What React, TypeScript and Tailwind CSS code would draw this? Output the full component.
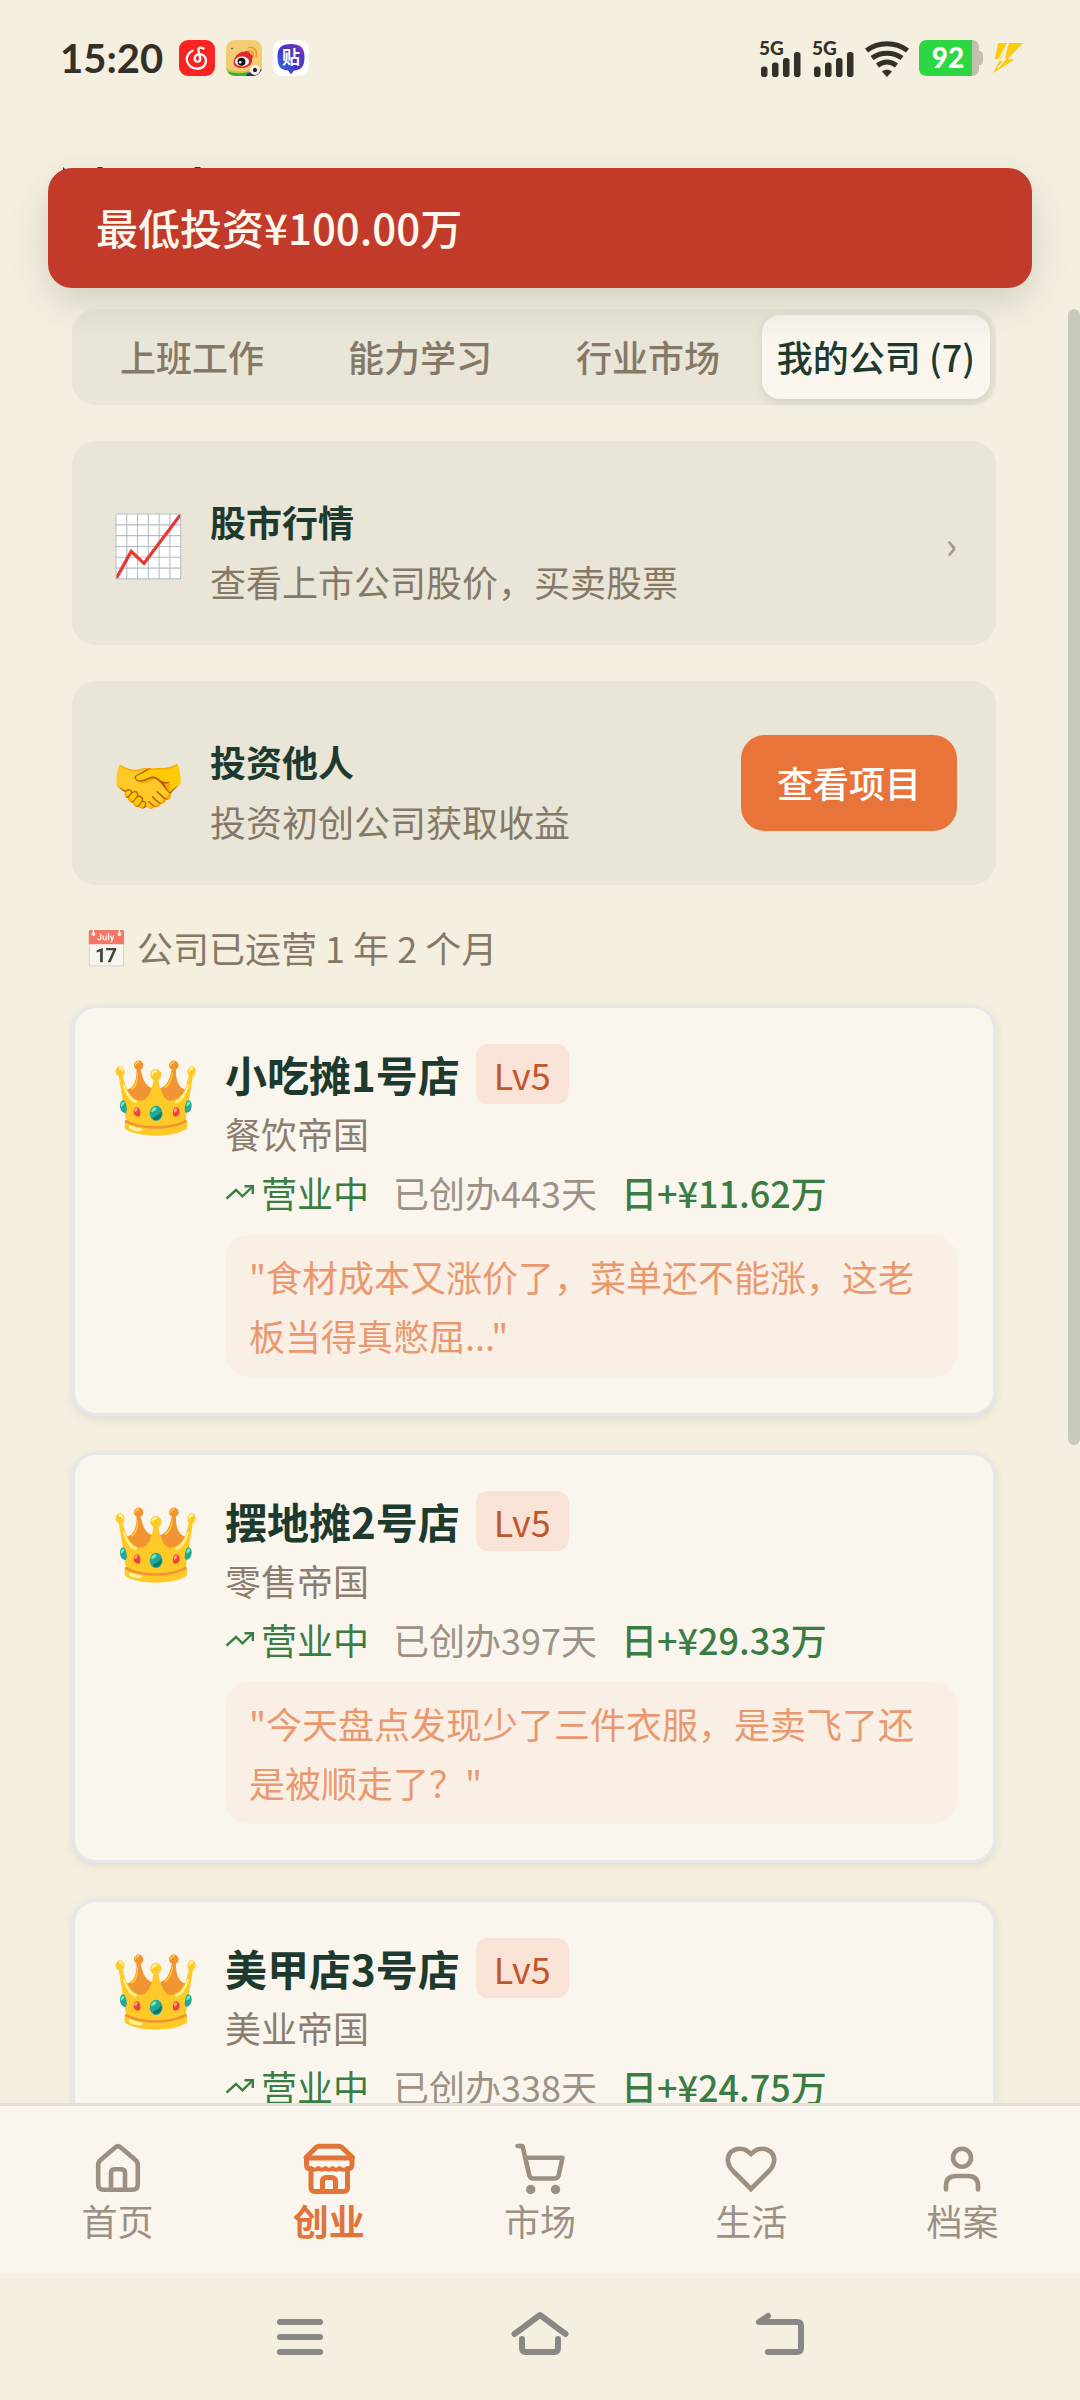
import React from 'react'

interface Company {
  id: number
  name: string
  level: number
  industry: string
  days: number
  dailyIncome: string
  quote?: string
}

const companies: Company[] = [
  {
    id: 1,
    name: '小吃摊1号店',
    level: 5,
    industry: '餐饮帝国',
    days: 443,
    dailyIncome: '11.62万',
    quote: '"食材成本又涨价了，菜单还不能涨，这老板当得真憋屈..."',
  },
  {
    id: 2,
    name: '摆地摊2号店',
    level: 5,
    industry: '零售帝国',
    days: 397,
    dailyIncome: '29.33万',
    quote: '"今天盘点发现少了三件衣服，是卖飞了还是被顺走了？"',
  },
  {
    id: 3,
    name: '美甲店3号店',
    level: 5,
    industry: '美业帝国',
    days: 338,
    dailyIncome: '24.75万',
  },
]

const tabs = ['上班工作', '能力学习', '行业市场', '我的公司 (7)']

const emojiFont = "font-['Noto_Color_Emoji','Noto_Sans_CJK_SC',sans-serif]"

const SignalIcon = () => (
  <svg viewBox="0 0 43 38" className="h-[38px] w-[43px] overflow-visible" fill="#332f29">
    <text x="0" y="16" fontSize="19" fontWeight="900" fontFamily="Lato, sans-serif">
      5G
    </text>
    <rect x="2" y="27.500" width="6.500" height="10.500" rx="2.800" />
    <rect x="13" y="23.500" width="6.500" height="14.500" rx="2.800" />
    <rect x="24" y="19" width="6.500" height="19" rx="2.800" />
    <rect x="35" y="13" width="6.500" height="25" rx="2.800" />
  </svg>
)

const WifiIcon = () => (
  <svg viewBox="0 0 44 38" className="h-[38px] w-11" fill="none" stroke="#332f29" strokeWidth="5">
    <path d="M1.500 11.500C13.500 2.500 30.500 2.500 42.500 11.500" />
    <path d="M7 19C16 12.500 28 12.500 37 19" />
    <path d="M12.500 26.500C18.500 22 25.500 22 31.500 26.500" />
    <path d="M17 32.500C20 30 24 30 27 32.500L22 38Z" fill="#332f29" stroke="none" />
  </svg>
)

const BatteryIcon = () => (
  <svg viewBox="0 0 64 36" className="h-9 w-16">
    <path d="M50 0h3c4 0 7 3 7 7v4c3 0 4 2 4 4v6c0 2-1 4-4 4v4c0 4-3 7-7 7h-3z" fill="#c3bfae" />
    <path d="M8 0h45v36H8c-5 0-8-3-8-8V8c0-5 3-8 8-8z" fill="#2bd743" />
    <text x="29" y="28" textAnchor="middle" fontSize="28" fontWeight="900" fill="#fff" fontFamily="Lato, sans-serif">
      92
    </text>
  </svg>
)

const MusicAppIcon = () => (
  <svg viewBox="0 0 36 36" className="size-9">
    <rect width="36" height="36" rx="9" fill="#fb2321" />
    <path
      d="M24.500 8.500c-3-2-5.500-.5-5 2l1.700 8c.7 3.500-5.200 4.500-5.600.5-.3-4.500 5.400-6.300 9-3.500 4.500 4 2.500 13-6.500 13.200C9 28.500 5.500 19.500 9.500 14c1.300-1.800 2.500-2.500 4-3.200"
      fill="none"
      stroke="#fff"
      strokeWidth="2.300"
      strokeLinecap="round"
    />
  </svg>
)

const WeiboAppIcon = () => (
  <svg viewBox="0 0 36 36" className="size-9">
    <defs>
      <clipPath id="weibo-clip">
        <rect width="36" height="36" rx="9" />
      </clipPath>
    </defs>
    <g clipPath="url(#weibo-clip)">
      <rect width="36" height="36" fill="#f3cc74" />
      <path d="M0 28q14 6 24 2l12 6H0z" fill="#c9c53a" />
      <path d="M0 31q12 4 22 1l6 4H0z" fill="#3cae3f" />
      <path d="M22 33l14-4v7H20z" fill="#3b2a8c" />
      <path d="M8 20c2-6 8-9 10-8 2-2 6-1 6 2 4 1 3 4 2 5 1 6-5 9-10 9S6 26 8 20z" fill="#e3262b" />
      <ellipse cx="16" cy="21.500" rx="7" ry="5" fill="#fff" />
      <circle cx="15.500" cy="21.700" r="4" fill="#111" />
      <circle cx="14.200" cy="22.300" r="1.300" fill="#fff" />
      <path d="M22 11c4-1 6 2 5 5M23 7.500c6-1 8.500 4 7 9" fill="none" stroke="#f0962b" strokeWidth="1.500" strokeLinecap="round" />
      <circle cx="6" cy="8.500" r=".8" fill="#445" />
      <circle cx="29" cy="30" r="5" fill="#f5f5f5" />
      <path d="M29 27.500l2.300 1.700-.9 2.800h-2.800l-.9-2.800zM24.500 28l1.200 1M33.500 28l-1.200 1" fill="#222" />
    </g>
  </svg>
)

const TiebaAppIcon = () => (
  <svg viewBox="0 0 36 36" className="size-9">
    <defs>
      <linearGradient id="tieba-fill" x1="0" y1="1" x2="1" y2="0">
        <stop offset="0" stopColor="#2d7bea" />
        <stop offset=".45" stopColor="#4338c8" />
        <stop offset=".8" stopColor="#5a36c0" />
        <stop offset="1" stopColor="#f0468c" />
      </linearGradient>
    </defs>
    <rect width="36" height="36" rx="9" fill="#fff" />
    <path d="M18 4c9 0 13.500 3 13.500 13S28 30 21 30.500l-3 4-3-4C8 30 4.500 27 4.500 17S9 4 18 4z" fill="url(#tieba-fill)" />
    <text x="18" y="24" textAnchor="middle" fontSize="18" fontWeight="700" fill="#fff" fontFamily="'Noto Sans CJK SC', sans-serif">
      贴
    </text>
  </svg>
)

const BoltIcon = () => (
  <svg viewBox="0 0 30 32" className="h-8 w-[30px]" fill="#fccb0c">
    <path d="M5 1h9L8 17H2zM16 1h14L15 17l6 1L0 31 7 18l4 1z" />
    <path d="M15 1L5 19l7-2-7 9" fill="none" stroke="#f4efdf" strokeWidth="1.500" />
  </svg>
)

const StatusBar = () => (
  <header className="flex h-[116px] shrink-0 items-center justify-between pr-[57px] pl-[60px]">
    <div className="flex items-center gap-[11px]">
      <span className="w-[108px] font-['Lato',sans-serif] text-[40px] leading-none font-bold text-[#332f29]">
        15:20
      </span>
      <MusicAppIcon />
      <WeiboAppIcon />
      <TiebaAppIcon />
    </div>
    <div className="flex items-center gap-[10px]">
      <SignalIcon />
      <SignalIcon />
      <WifiIcon />
      <BatteryIcon />
      <BoltIcon />
    </div>
  </header>
)

const TrendIcon = () => (
  <svg viewBox="0 0 30 18" className="h-[18px] w-[30px]" fill="none" stroke="currentColor" strokeWidth="2.400">
    <path d="M1.500 15.700L11 7l6.500 6.300L27.500 3.500" />
    <path d="M19.500 3.200H27.800V11" />
  </svg>
)

const CompanyCard: React.FC<{ company: Company }> = ({ company }) => (
  <article className="flex gap-6 rounded-3xl border-3 border-gray-200 bg-[#faf6ee] p-9 shadow-[0_3px_9px_rgba(30,58,47,0.10)]">
    <span className={`w-[90px] shrink-0 pt-[6px] text-center text-[72px] leading-[96px] ${emojiFont}`}>👑</span>
    <div className="min-w-0 flex-1">
      <div className="flex h-[60px] items-center gap-4">
        <h3 className="text-[42px] leading-[58px] font-bold text-[#1e3a2f]">{company.name}</h3>
        <span className="rounded-xl bg-[#f8e3d6] px-[18px] text-[36px] leading-[60px] text-[#c0562b]">
          Lv{company.level}
        </span>
      </div>
      <p className="text-[36px] leading-[58px] text-[#8b7d6f]">{company.industry}</p>
      <div className="flex items-center gap-6 text-[36px] leading-[60px]">
        <span className="flex items-center gap-[6px] text-[#3a7d44]">
          <TrendIcon />
          营业中
        </span>
        <span className="text-[#9c9185]">已创办{company.days}天</span>
        <span className="font-medium text-[#3a7d44]">日+¥{company.dailyIncome}</span>
      </div>
      {company.quote && (
        <p className="mt-[13px] rounded-3xl bg-[#f9efe5] px-6 py-3 text-[36px] leading-[59px] text-[#e9996f]">
          {company.quote}
        </p>
      )}
    </div>
  </article>
)

const HomeIcon = () => (
  <>
    <path d="M27.500 8.200Q30 6 32.500 8.200L47.500 21Q49.800 23 49.800 26V45.500Q49.800 50.800 44.500 50.800H15.500Q10.200 50.800 10.200 45.500V26Q10.200 23 12.500 21Z" />
    <path d="M23 51V34Q23 30.200 26.500 30.200H33.500Q37 30.200 37 34V51" />
  </>
)

const StoreIcon = () => (
  <g strokeWidth="5">
    <path d="M7 18.500L17 8.500Q18.500 7.300 20 7.300H40Q41.500 7.300 43 8.500L53.500 18.500" />
    <path d="M7.500 19H53V26Q52.500 30 48.500 30V48.500Q48.500 52.500 44.500 52.500H16Q12 52.500 12 48.500V30Q7.500 30 7.500 26Z" />
    <path d="M12 29Q16 32.500 19.500 29Q23 32.500 26.500 29Q30 32.500 33.500 29Q37 32.500 40.500 29Q44 32.500 48.500 29" strokeWidth="4" />
    <path d="M23.500 51V42.500Q23.500 38.500 27.500 38.500H32Q36.500 38.500 36.500 42.500V51" />
  </g>
)

const CartIcon = () => (
  <>
    <path d="M7.500 7H12.500L19.500 37Q20.500 39.500 23 39.500H44Q47.500 39.500 48.500 37L52.500 18.800H16" />
    <circle cx="20.700" cy="50.500" r="4.700" fill="currentColor" stroke="none" />
    <circle cx="45.500" cy="50.500" r="4.700" fill="currentColor" stroke="none" />
  </>
)

const HeartIcon = () => (
  <path
    d="M30 50L12.500 32.500C6 26 5 18 10 13C15 8.500 22.500 9 27 12.500L30 15L33 12.500C37.500 9 45 8.500 50 13C55 18 54 26 47.500 32.500Z"
    strokeLinejoin="miter"
  />
)

const PersonIcon = () => (
  <>
    <circle cx="30" cy="18.800" r="9" />
    <path d="M14 50.500V47Q14 37 24 37H36Q46 37 46 47V50.500" />
  </>
)

const navItems = [
  { label: '首页', icon: HomeIcon, active: false },
  { label: '创业', icon: StoreIcon, active: true },
  { label: '市场', icon: CartIcon, active: false },
  { label: '生活', icon: HeartIcon, active: false },
  { label: '档案', icon: PersonIcon, active: false },
]

const BottomNav = () => (
  <nav className="grid h-[171px] shrink-0 grid-cols-5 border-t-3 border-[#e4dfd6] bg-[#faf6ee] px-3 pt-[33px]">
    {navItems.map(({ label, icon: Icon, active }) => (
      <a
        key={label}
        href="#"
        aria-current={active ? 'page' : undefined}
        className={`flex flex-col items-center ${active ? 'font-bold text-[#e07439]' : 'text-[#9c9083]'}`}
      >
        <svg
          viewBox="0 0 60 60"
          className="size-[60px]"
          fill="none"
          stroke="currentColor"
          strokeWidth="4.600"
          strokeLinecap="round"
          strokeLinejoin="round"
        >
          <Icon />
        </svg>
        <span className="text-[36px] leading-[42px]">{label}</span>
      </a>
    ))}
  </nav>
)

const SystemBar = () => (
  <footer className="flex h-[126px] shrink-0 items-center justify-center gap-[180px]">
    <button type="button" aria-label="最近任务">
      <svg viewBox="0 0 60 60" className="size-[60px]" fill="none" stroke="#8a8885" strokeWidth="6" strokeLinecap="round">
        <path d="M10 15H50M10 30H50M10 45H50" />
      </svg>
    </button>
    <button type="button" aria-label="主屏幕">
      <svg viewBox="0 0 60 60" className="size-[60px]" fill="none" stroke="#8a8885" strokeWidth="6" strokeLinecap="round" strokeLinejoin="round">
        <path d="M4.500 27L30 8L55.500 27" />
        <path d="M12 32V41Q12 45 16 45H44Q48 45 48 41V32" />
      </svg>
    </button>
    <button type="button" aria-label="返回">
      <svg viewBox="0 0 60 60" className="size-[60px]" fill="none" stroke="#8a8885" strokeWidth="6" strokeLinecap="round" strokeLinejoin="round">
        <path d="M18 9L9 15H47Q51 15 51 19V41Q51 45 47 45H18" />
      </svg>
    </button>
  </footer>
)

export default function App() {
  return (
    <div className="relative flex h-screen flex-col overflow-hidden bg-[#f5efdf] font-['Noto_Sans_CJK_SC',sans-serif]">
      <StatusBar />
      <div className="h-[193px] shrink-0 px-[60px] pt-[51px]">
        <svg viewBox="0 0 150 4" className="h-1 w-[150px]" fill="#1e3a2f">
          <path d="M3 0l4 4H3zM37 0h6l-3 3zM134 0h7l-3 3z" />
        </svg>
      </div>

      <div
        role="alert"
        className="absolute inset-x-12 top-[168px] z-10 rounded-3xl bg-[#c23b2a] px-12 pb-[2px] text-[42px] leading-[118px] font-medium text-[#fdf8ee] shadow-[0_15px_42px_-3px_rgba(30,58,47,0.18)]"
      >
        最低投资¥100.00万
      </div>

      <main className="flex min-h-0 flex-1 overflow-hidden">
        <div className="flex min-w-0 flex-1 flex-col px-[72px]">
          <div role="tablist" className="grid shrink-0 grid-cols-4 rounded-3xl bg-[#eae6d7] p-[6px]">
            {tabs.map((tab, i) => (
              <button
                key={tab}
                type="button"
                role="tab"
                aria-selected={i === 3}
                className={`rounded-[18px] pb-[2px] text-[36px] leading-[82px] font-medium whitespace-nowrap ${
                  i === 3 ? 'bg-[#faf6ee] text-[#1e3a2f] shadow-[0_3px_9px_rgba(30,58,47,0.12)]' : 'text-[#857866]'
                }`}
              >
                {tab}
              </button>
            ))}
          </div>

          <a href="#" className="mt-9 flex h-[204px] shrink-0 items-center gap-6 rounded-3xl bg-[#eae6d7] px-[39px]">
            <span className={`w-[75px] pt-2 text-center text-[60px] leading-[80px] ${emojiFont}`}>📈</span>
            <div className="flex-1 pt-4 text-[36px] leading-[60px]">
              <h3 className="font-bold text-[#1e3a2f]">股市行情</h3>
              <p className="text-[#857866]">查看上市公司股价，买卖股票</p>
            </div>
            <span className="text-[36px] font-medium text-[#a2998c]">›</span>
          </a>

          <section className="mt-9 flex h-[204px] shrink-0 items-center gap-6 rounded-3xl bg-[#eae6d7] px-[39px]">
            <span className={`w-[75px] pt-2 text-center text-[60px] leading-[80px] ${emojiFont}`}>🤝</span>
            <div className="flex-1 pt-4 text-[36px] leading-[60px]">
              <h3 className="font-bold text-[#1e3a2f]">投资他人</h3>
              <p className="text-[#857866]">投资初创公司获取收益</p>
            </div>
            <button
              type="button"
              className="rounded-3xl bg-[#e87439] px-9 pb-[2px] text-[36px] leading-[94px] font-medium text-white"
            >
              查看项目
            </button>
          </section>

          <p className="mt-8 flex shrink-0 items-center gap-2 px-3 text-[36px] leading-[54px] text-[#857866]">
            <span className={`w-[45px] pt-[6px] text-center opacity-70 ${emojiFont}`}>📅</span>
            公司已运营 1 年 2 个月
          </p>

          <div className="mt-7 flex flex-col gap-9">
            {companies.map((company) => (
              <CompanyCard key={company.id} company={company} />
            ))}
          </div>
        </div>
        {/* scroll thumb */}
        <div className="h-[1136px] w-3 shrink-0 rounded-full bg-[#c8cbbc]" />
      </main>

      <BottomNav />
      <SystemBar />
    </div>
  )
}
